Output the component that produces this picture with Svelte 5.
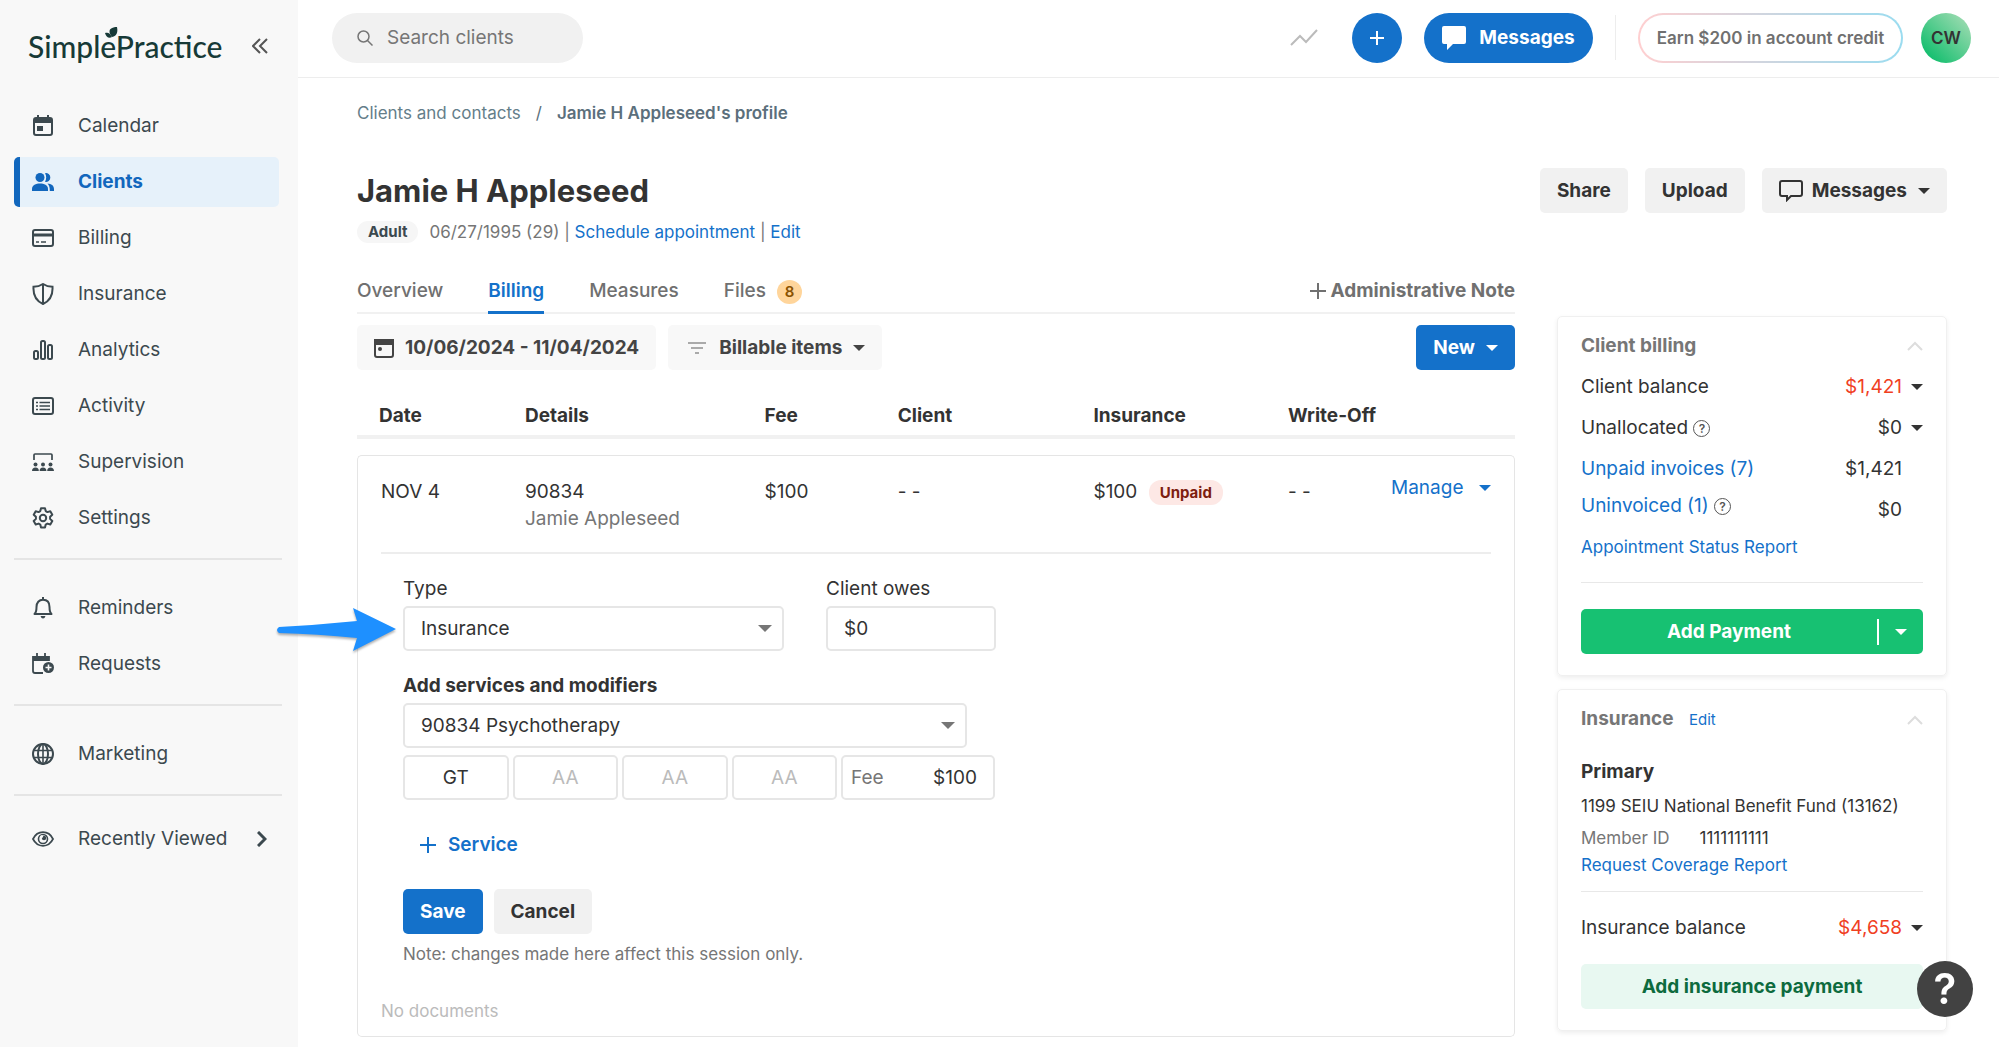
<script>
    let type = "Insurance"
    let service = "90834 Psychotherapy"
    let clientOwes = "$0"
    let fee = "$100"
    let modifiers = ["GT", "", "", ""]
    let search = ""

    // inner shapes of the 22x22 sidebar icons
    const icons = {
        calendar: `<path d="M6 0v4M16 0v4" stroke-width="2"/><rect x="2" y="3" width="18" height="17" rx="2"/><path d="M2 3h18v5H2z" fill="currentColor" stroke="none"/><path d="M5 11h6v5H5z" fill="currentColor" stroke="none"/>`,
        clients: `<g fill="currentColor" stroke="none"><circle cx="8" cy="6.500" r="4.500"/><path d="M0 20v-2c0-4 4-5.500 8-5.500s8 1.500 8 5.500v2z"/><path d="M13 2.200a4.400 4.400 0 1 1 0 8.600c1.600-2.400 1.600-6.200 0-8.600z"/><path d="M15.500 12.600c3.800.4 6.500 2 6.500 5.400v2h-4.200c.1-3-.5-5.600-2.300-7.400z"/></g>`,
        billing: `<rect x="1" y="3" width="20" height="16" rx="2"/><path d="M1 8h20" stroke-width="3"/><path d="M4 15h3M9 15h5" stroke-width="1.500"/>`,
        insurance: `<path d="M11 1c-3 2-6 2.700-9.500 2.800C1 12 4 18 11 21c7-3 10-9 9.500-17.200C17 3.700 14 3 11 1zM11 1v20"/>`,
        analytics: `<rect x="2" y="12" width="4" height="8" rx="1.500"/><rect x="9" y="2" width="4" height="18" rx="1.500"/><rect x="16" y="6" width="4" height="14" rx="1.500"/>`,
        activity: `<rect x="1" y="3" width="20" height="16" rx="2"/><path d="M7.500 7.500H18M7.500 11H18M7.500 14.500H18M4 7.500h2M4 11h2M4 14.500h2" stroke-width="1.600"/>`,
        supervision: `<path d="M2 9V4q0-1 1-1h16q1 0 1 1v5" stroke-width="1.700"/><g fill="currentColor" stroke="none"><circle cx="3.500" cy="13.500" r="2"/><circle cx="11" cy="13.500" r="2"/><circle cx="18.500" cy="13.500" r="2"/><path d="M0 20q0-3.500 3.500-3.500T6.800 20zM7.600 20q0-3.500 3.400-3.500t3.400 3.500zM15.200 20q0-3.500 3.300-3.500T22 20z"/></g>`,
        settings: `<path d="M9 1.200h4l.7 2.900 1.700 1 2.900-.9 2 3.500-2.200 2v2.200l2.200 2.100-2 3.500-2.900-.9-1.700 1-.7 2.900H9l-.7-2.900-1.700-1-2.900.9-2-3.500 2.200-2.100V9.700L1.700 7.700l2-3.500 2.900.9 1.700-1z" stroke-linejoin="round"/><circle cx="11" cy="11" r="3.200"/>`,
        reminders: `<path d="M11 0v3M2.500 17c1.600-1.500 2-3 2-7C4.500 5.500 7 2.800 11 2.800s6.500 2.700 6.500 7.200c0 4 .4 5.500 2 7z" stroke-linejoin="round"/><path d="M8.500 19h5q-.8 2.500-2.500 2.500T8.500 19z" fill="currentColor" stroke="none"/>`,
        requests: `<path d="M5 0v4M13 0v4M11 20H3q-2 0-2-2V4h16v4" stroke-width="1.800"/><path d="M1 3h16v5H1z" fill="currentColor" stroke="none"/><circle cx="16.500" cy="14.500" r="5.500" fill="currentColor" stroke="none"/><path d="M16.500 11.500v6M13.500 14.500h6" stroke="#f8f8f8" stroke-width="1.600"/>`,
        marketing: `<circle cx="11" cy="11" r="10"/><ellipse cx="11" cy="11" rx="5" ry="10"/><path d="M11 1v20M2 7.500h18M2 14.500h18" stroke-width="1.600"/>`,
        viewed: `<path d="M1 11C5.500.7 16.500.7 21 11 16.500 21.300 5.500 21.300 1 11z" transform="translate(0 1.300) scale(1 .88)"/><circle cx="11" cy="11" r="4.500" stroke-width="1.600"/><circle cx="12" cy="10" r="2.200" fill="currentColor" stroke="none"/><circle cx="9.700" cy="8.600" r="1.400" fill="#f8f8f8" stroke="none"/>`,
    }

    const navGroups = [
        [
            { label: "Calendar", icon: "calendar" },
            { label: "Clients", icon: "clients", active: true },
            { label: "Billing", icon: "billing" },
            { label: "Insurance", icon: "insurance" },
            { label: "Analytics", icon: "analytics" },
            { label: "Activity", icon: "activity" },
            { label: "Supervision", icon: "supervision" },
            { label: "Settings", icon: "settings" },
        ],
        [
            { label: "Reminders", icon: "reminders" },
            { label: "Requests", icon: "requests" },
        ],
        [{ label: "Marketing", icon: "marketing" }],
        [{ label: "Recently Viewed", icon: "viewed", more: true }],
    ]
</script>

<div class="app">
    <aside>
        <div class="brand">
            <a class="logo" href="#home">
                SimplePractice
                <svg class="leaf" viewBox="0 0 14 12" width="14" height="12">
                    <path d="M5 7C3 2 7 0 12 0c1 5 0 9-5 10z" />
                    <path d="M0 6c3-1 5 0 7 4-3 2-6 0-7-4z" />
                </svg>
            </a>
            <button class="plain collapse" aria-label="Collapse menu">
                <svg viewBox="0 0 16 16" width="16" height="16">
                    <path d="M8 1L1 8l7 7M15 1L8 8l7 7" />
                </svg>
            </button>
        </div>
        <nav>
            {#each navGroups as group}
                <ul>
                    {#each group as item}
                        <li>
                            <a class="item" class:active={item.active} href="#{item.icon}">
                                <svg viewBox="0 0 22 22" width="22" height="22">{@html icons[item.icon]}</svg>
                                {item.label}
                                {#if item.more}
                                    <svg class="more" viewBox="0 0 10 16" width="10" height="16">
                                        <path d="M1 1l7 7-7 7" />
                                    </svg>
                                {/if}
                            </a>
                        </li>
                    {/each}
                </ul>
            {/each}
        </nav>
    </aside>

    <div class="page">
        <header>
            <label class="search">
                <svg viewBox="0 0 16 16" width="16" height="16">
                    <circle cx="6.500" cy="6.500" r="5.500" />
                    <path d="M10.500 10.500l5 5" />
                </svg>
                <input type="text" placeholder="Search clients" aria-label="Search clients" bind:value={search} />
            </label>
            <div class="actions">
                <button class="plain trend" aria-label="Trends">
                    <svg viewBox="0 0 28 18" width="28" height="18"><path d="M1 16l9-9 6 6L27 1" /></svg>
                </button>
                <button class="add" aria-label="Add">
                    <svg viewBox="0 0 16 16" width="16" height="16"><path d="M8 1v14M1 8h14" /></svg>
                </button>
                <button class="inbox">
                    <svg viewBox="0 0 24 24" width="24" height="24">
                        <path d="M2 0h20q2 0 2 2v14q0 2-2 2H11l-6 6v-6H2q-2 0-2-2V2q0-2 2-2z" />
                    </svg>
                    Messages
                </button>
                <span class="bar"></span>
                <button class="earn">Earn $200 in account credit</button>
                <button class="avatar">CW</button>
            </div>
        </header>

        <main>
            <div class="crumbs">
                <a href="#clients">Clients and contacts</a>
                <span>/</span>
                <b>Jamie H Appleseed's profile</b>
            </div>

            <div class="title">
                <h1>Jamie H Appleseed</h1>
                <div class="title-buttons">
                    <button class="btn">Share</button>
                    <button class="btn">Upload</button>
                    <button class="btn">
                        <svg class="bubble" viewBox="0 0 24 22" width="24" height="22">
                            <path d="M3 1h18q2 0 2 2v11q0 2-2 2H12l-4 4v-4H3q-2 0-2-2V3q0-2 2-2z" />
                        </svg>
                        Messages
                        <span class="caret"></span>
                    </button>
                </div>
            </div>
            <div class="sub">
                <span class="pill">Adult</span>
                <span>06/27/1995 (29) | <a href="#schedule">Schedule appointment</a> | <a href="#edit">Edit</a></span>
            </div>

            <div class="columns">
                <section>
                    <div class="tabs">
                        <a href="#overview">Overview</a>
                        <a class="current" href="#billing-tab">Billing</a>
                        <a href="#measures">Measures</a>
                        <a href="#files">Files <span class="count">8</span></a>
                        <button class="plain note-button">
                            <svg viewBox="0 0 16 16" width="16" height="16"><path d="M8 0v16M0 8h16" /></svg>
                            Administrative Note
                        </button>
                    </div>

                    <div class="filters">
                        <button class="btn light">
                            <svg class="cal" viewBox="0 0 20 20" width="20" height="20">
                                <rect x="1" y="2" width="18" height="17" rx="2" />
                                <path d="M0 1h20v6H0z" />
                                <circle cx="6" cy="11" r="2" />
                            </svg>
                            10/06/2024 - 11/04/2024
                        </button>
                        <button class="btn light filter">
                            <svg class="lines" viewBox="0 0 18 12" width="18" height="12">
                                <path d="M0 1h18M3 6h12M7 11h4" />
                            </svg>
                            Billable items
                            <span class="caret"></span>
                        </button>
                        <button class="btn blue new">New <span class="caret"></span></button>
                    </div>

                    <table>
                        <thead>
                            <tr>
                                <th class="date">Date</th>
                                <th class="details">Details</th>
                                <th class="fee">Fee</th>
                                <th class="client">Client</th>
                                <th class="insurance">Insurance</th>
                                <th class="write-off">Write-Off</th>
                                <th aria-label="Actions"></th>
                            </tr>
                        </thead>
                        <tbody>
                            <tr class="gap"><td colspan="7"></td></tr>
                            <tr class="entry">
                                <td>NOV 4</td>
                                <td>90834<br /><span class="muted">Jamie Appleseed</span></td>
                                <td>$100</td>
                                <td>- -</td>
                                <td>$100 <span class="unpaid">Unpaid</span></td>
                                <td>- -</td>
                                <td class="manage">
                                    <button class="plain">Manage <span class="caret"></span></button>
                                </td>
                            </tr>
                            <tr>
                                <td class="editor" colspan="7">
                                    <form on:submit|preventDefault>
                                        <div class="row">
                                            <div class="field type">
                                                <label for="type">Type</label>
                                                <div class="select">
                                                    <select id="type" bind:value={type}>
                                                        <option>Insurance</option>
                                                        <option>Self-pay</option>
                                                    </select>
                                                </div>
                                                <svg class="pointer" viewBox="0 0 120 46" width="120" height="46">
                                                    <path d="M2 20Q40 18 80 14L76 1l43 21-43 22 4-13Q40 27 2 26q-4-3 0-6z" />
                                                </svg>
                                            </div>
                                            <div class="field owes">
                                                <label for="owes">Client owes</label>
                                                <input id="owes" type="text" bind:value={clientOwes} />
                                            </div>
                                        </div>
                                        <div class="field services">
                                            <label for="service">Add services and modifiers</label>
                                            <div class="select">
                                                <select id="service" bind:value={service}>
                                                    <option>90834 Psychotherapy</option>
                                                    <option>90837 Psychotherapy</option>
                                                </select>
                                            </div>
                                        </div>
                                        <div class="modifiers">
                                            {#each modifiers as modifier, i}
                                                <input type="text" placeholder="AA" aria-label="Modifier {i + 1}" bind:value={modifier} />
                                            {/each}
                                            <label class="fee-box">Fee <input type="text" bind:value={fee} /></label>
                                        </div>
                                        <button type="button" class="plain add-service">
                                            <svg viewBox="0 0 16 16" width="16" height="16"><path d="M8 0v16M0 8h16" /></svg>
                                            Service
                                        </button>
                                        <div class="form-buttons">
                                            <button class="btn blue">Save</button>
                                            <button type="button" class="btn">Cancel</button>
                                        </div>
                                        <p class="hint">Note: changes made here affect this session only.</p>
                                    </form>
                                    <p class="documents">No documents</p>
                                </td>
                            </tr>
                        </tbody>
                    </table>
                </section>

                <div class="cards">
                    <div class="card">
                        <div class="card-title">
                            <h2>Client billing</h2>
                            <button class="plain" aria-label="Collapse client billing">
                                <svg class="up" viewBox="0 0 16 10" width="16" height="10"><path d="M1 9l7-7 7 7" /></svg>
                            </button>
                        </div>
                        <div class="amounts">
                            <div class="amount">
                                <span>Client balance</span>
                                <button class="plain"><span class="red">$1,421</span><span class="caret"></span></button>
                            </div>
                            <div class="amount">
                                <span>Unallocated <span class="info">?</span></span>
                                <button class="plain">$0<span class="caret"></span></button>
                            </div>
                            <div class="amount">
                                <a href="#unpaid">Unpaid invoices (7)</a>
                                <span class="value">$1,421</span>
                            </div>
                            <div class="amount raised">
                                <span><a href="#uninvoiced">Uninvoiced (1)</a> <span class="info">?</span></span>
                                <span class="value">$0</span>
                            </div>
                        </div>
                        <a class="small report" href="#report">Appointment Status Report</a>
                        <hr />
                        <div class="payment">
                            <button>Add Payment</button>
                            <button class="split" aria-label="More payment options"><span class="caret"></span></button>
                        </div>
                    </div>

                    <div class="card">
                        <div class="card-title">
                            <h2>Insurance <a class="edit" href="#edit-insurance">Edit</a></h2>
                            <button class="plain" aria-label="Collapse insurance">
                                <svg class="up" viewBox="0 0 16 10" width="16" height="10"><path d="M1 9l7-7 7 7" /></svg>
                            </button>
                        </div>
                        <h3>Primary</h3>
                        <p class="small plan">1199 SEIU National Benefit Fund (13162)</p>
                        <p class="small member"><span class="muted">Member ID</span> 1111111111</p>
                        <a class="small" href="#coverage">Request Coverage Report</a>
                        <hr class="tight" />
                        <div class="amount">
                            <span>Insurance balance</span>
                            <button class="plain"><span class="red">$4,658</span><span class="caret"></span></button>
                        </div>
                        <button class="btn insurance-payment">Add insurance payment</button>
                    </div>
                </div>
            </div>
        </main>
    </div>

    <button class="help" aria-label="Help">?</button>
</div>

<style>
    :global(body) {
        margin: 0;
        background: #fff;
    }

    .app {
        display: flex;
        min-height: 100vh;
        font-family: Inter, "Liberation Sans", sans-serif;
        font-size: 19px;
        line-height: 24px;
        color: #333;
    }

    .app * {
        box-sizing: border-box;
    }

    a {
        color: #1471ca;
        text-decoration: none;
    }

    button,
    input,
    select {
        font: inherit;
        color: inherit;
    }

    button {
        border: none;
        padding: 0;
        cursor: pointer;
        white-space: nowrap;
    }

    svg {
        flex: none;
        fill: none;
        stroke: currentColor;
        stroke-width: 2;
    }

    h1,
    h2,
    h3,
    p,
    ul {
        margin: 0;
        padding: 0;
    }

    .plain {
        display: flex;
        align-items: center;
        background: none;
    }

    .caret {
        flex: none;
        border: 6px solid transparent;
        border-top-color: currentColor;
        border-bottom: none;
    }

    .muted {
        color: #767676;
    }

    /* sidebar */
    aside {
        flex: none;
        width: 298px;
        background: #f8f8f8;
        color: #3c494f;
    }

    .brand {
        display: flex;
        align-items: center;
        justify-content: space-between;
        height: 92px;
        padding: 0 30px 0 28px;
    }

    .logo {
        position: relative;
        color: #173a37;
        font-family: Lato, sans-serif;
        font-size: 30px;
        font-weight: 500;
    }

    .leaf {
        position: absolute;
        left: 77px;
        top: -7px;
        fill: currentColor;
        stroke: none;
    }

    .collapse {
        color: #555;
    }

    nav {
        padding: 9px 16px 0 14px;
    }

    ul {
        display: flex;
        flex-direction: column;
        gap: 6px;
        list-style: none;
        padding-bottom: 15px;
    }

    ul + ul {
        border-top: 2px solid #e5e5e5;
        padding-top: 23px;
    }

    ul:last-child {
        padding-top: 18px;
    }

    .item {
        display: flex;
        align-items: center;
        gap: 24px;
        height: 50px;
        margin-right: 3px;
        padding: 0 12px 0 18px;
        border-radius: 5px;
        color: inherit;
    }

    .item.active {
        padding-left: 12px;
        border-left: 6px solid #1267bd;
        background: #e6f1fa;
        color: #1267bd;
        font-weight: 700;
    }

    .more {
        margin-left: auto;
        stroke-width: 3;
    }

    /* top bar */
    .page {
        flex: 1;
        min-width: 0;
    }

    header {
        display: flex;
        align-items: center;
        justify-content: space-between;
        height: 78px;
        padding: 0 28px 2px 34px;
        border-bottom: 1px solid #ededed;
    }

    .search {
        display: flex;
        align-items: center;
        gap: 14px;
        width: 251px;
        height: 50px;
        padding: 0 20px 0 25px;
        border-radius: 25px;
        background: #f1f1f1;
        color: #767676;
    }

    .search svg {
        stroke-width: 1.5;
    }

    .search input {
        width: 100%;
        min-width: 0;
        padding: 0;
        border: none;
        outline: none;
        background: none;
    }

    .search input::placeholder {
        color: #767676;
        opacity: 1;
    }

    .actions {
        display: flex;
        align-items: center;
    }

    .trend {
        margin-right: 34px;
        color: #bbb;
    }

    .add,
    .inbox {
        display: flex;
        align-items: center;
        justify-content: center;
        height: 50px;
        border-radius: 25px;
        background: #1471ca;
        color: #fff;
    }

    .add {
        width: 50px;
        margin-right: 22px;
    }

    .inbox {
        gap: 13px;
        width: 169px;
        font-weight: 700;
    }

    .inbox svg {
        fill: #fff;
        stroke: none;
    }

    .bar {
        width: 1px;
        height: 45px;
        margin: 0 22px;
        background: #ededed;
    }

    .earn {
        width: 265px;
        height: 50px;
        border: 2px solid transparent;
        border-radius: 25px;
        background:
            linear-gradient(#fff, #fff) padding-box,
            linear-gradient(90deg, #ffcfd0, #9adcf0) border-box;
        color: #707070;
        font-size: 17px;
        font-weight: 600;
    }

    .avatar {
        width: 50px;
        height: 50px;
        margin-left: 18px;
        border-radius: 50%;
        background: linear-gradient(45deg, #17bf70 15%, #93d9ac 85%);
        color: #333;
        font-size: 17px;
        font-weight: 600;
    }

    /* client profile */
    main {
        padding: 25px 52px 10px 59px;
    }

    .crumbs {
        display: flex;
        gap: 15px;
        font-size: 17px;
        line-height: 20px;
        color: #5b6f7c;
    }

    .crumbs a {
        color: #647e8a;
    }

    .crumbs b {
        font-weight: 600;
    }

    .title {
        display: flex;
        align-items: center;
        justify-content: space-between;
        margin-top: 45px;
    }

    h1 {
        font-size: 31px;
        line-height: 40px;
        font-weight: 700;
    }

    .title-buttons {
        display: flex;
        gap: 17px;
    }

    .btn {
        display: flex;
        align-items: center;
        justify-content: center;
        height: 45px;
        padding: 0 17px;
        border-radius: 5px;
        background: #f1f1f1;
        font-weight: 700;
    }

    .btn .caret {
        margin-left: 11px;
    }

    .btn.light {
        background: #f8f8f8;
        color: #444;
    }

    .btn.blue {
        background: #1471ca;
        color: #fff;
    }

    .bubble {
        margin-right: 9px;
    }

    .sub {
        display: flex;
        align-items: center;
        gap: 11px;
        margin-top: 8px;
        font-size: 17px;
        line-height: 22px;
        color: #767676;
    }

    .pill {
        padding: 0 11px;
        border-radius: 11px;
        background: #f6f6f6;
        color: #3c494f;
        font-size: 15px;
        font-weight: 700;
    }

    .columns {
        display: grid;
        grid-template-columns: minmax(0, 1fr) 390px;
        gap: 42px;
        margin-top: 36px;
    }

    .tabs {
        display: flex;
        gap: 45px;
        border-bottom: 2px solid #f1f1f1;
        font-weight: 500;
        white-space: nowrap;
    }

    .tabs a {
        padding-bottom: 7px;
        margin-bottom: -2px;
        border-bottom: 3px solid transparent;
        color: #707070;
    }

    .tabs a.current {
        border-color: #1471ca;
        color: #1471ca;
        font-weight: 600;
    }

    .count {
        display: inline-block;
        width: 25px;
        margin-left: 6px;
        border-radius: 50%;
        background: #ffd59b;
        color: #8a5200;
        font-size: 15px;
        font-weight: 600;
        text-align: center;
    }

    .note-button {
        gap: 5px;
        height: 24px;
        margin-left: auto;
        color: #707070;
        font-weight: 700;
    }

    .filters {
        display: flex;
        gap: 12px;
        margin-top: 11px;
    }

    .cal {
        margin-right: 11px;
    }

    .cal path,
    .cal circle {
        fill: currentColor;
        stroke: none;
    }

    .lines {
        margin: 0 13px 0 3px;
        color: #aaa;
    }

    .new {
        margin-left: auto;
    }

    table {
        width: 100%;
        margin-top: 34px;
        table-layout: fixed;
        border-spacing: 0;
    }

    th {
        padding: 0 0 7px;
        border-bottom: 4px solid #f1f1f1;
        font-weight: 700;
        text-align: left;
        white-space: nowrap;
    }

    .date {
        width: 14.5%;
        padding-left: 22px;
    }

    .details {
        width: 20.7%;
    }

    .fee {
        width: 11.5%;
    }

    .client {
        width: 16.9%;
    }

    .insurance {
        width: 16.8%;
    }

    .write-off {
        width: 8.9%;
    }

    .gap td {
        height: 16px;
        padding: 0;
    }

    .entry td {
        padding: 22px 0 20px;
        border-top: 1px solid #e5e5e5;
        line-height: 27px;
        vertical-align: top;
        white-space: nowrap;
    }

    .entry td:first-child {
        padding-left: 23px;
        border-left: 1px solid #e5e5e5;
        border-top-left-radius: 5px;
    }

    .entry td:last-child {
        border-right: 1px solid #e5e5e5;
        border-top-right-radius: 5px;
    }

    .unpaid {
        margin-left: 6px;
        padding: 3px 11px;
        border-radius: 12px;
        background: #fde8e5;
        color: #7e1e10;
        font-size: 15px;
        font-weight: 700;
    }

    .entry .manage {
        padding: 18px 23px 0 0;
    }

    .manage button {
        justify-content: space-between;
        width: 100%;
        color: #1471ca;
    }

    .editor {
        padding: 0 23px 15px;
        border: 1px solid #e5e5e5;
        border-top: none;
        border-radius: 0 0 5px 5px;
    }

    form {
        padding: 23px 22px 0;
        border-top: 2px solid #ededed;
    }

    .row {
        display: flex;
        gap: 42px;
    }

    .field {
        position: relative;
        display: flex;
        flex-direction: column;
        gap: 5px;
    }

    .type {
        width: 381px;
    }

    .owes {
        width: 170px;
    }

    .services {
        width: 564px;
        margin-top: 23px;
    }

    .services label {
        font-weight: 700;
    }

    form input,
    select {
        width: 100%;
        height: 45px;
        padding: 0 16px;
        border: 2px solid #e6e6e6;
        border-radius: 5px;
        outline: none;
        background: #fff;
        appearance: none;
    }

    .select {
        position: relative;
    }

    .select::after {
        content: "";
        position: absolute;
        top: 19px;
        right: 12px;
        border: 7px solid transparent;
        border-top-color: #767676;
        border-bottom: none;
        pointer-events: none;
    }

    .pointer {
        position: absolute;
        right: calc(100% + 6px);
        bottom: -2px;
        fill: #1e90ff;
        stroke: none;
        filter: drop-shadow(0 2px 1px rgba(0, 0, 0, 0.3));
    }

    .modifiers {
        display: flex;
        gap: 4px;
        width: 592px;
        margin-top: 7px;
    }

    .modifiers > input {
        flex: 1;
        min-width: 0;
        text-align: center;
    }

    .modifiers > input::placeholder {
        color: #bbb;
        opacity: 1;
    }

    .fee-box {
        display: flex;
        align-items: center;
        width: 154px;
        height: 45px;
        padding-left: 8px;
        border: 2px solid #e6e6e6;
        border-radius: 5px;
        color: #767676;
    }

    .fee-box input {
        min-width: 0;
        height: 24px;
        padding: 0 16px 0 0;
        border: none;
        color: #333;
        text-align: right;
    }

    .add-service {
        gap: 12px;
        margin: 33px 0 32px 17px;
        color: #1471ca;
        font-weight: 600;
    }

    .form-buttons {
        display: flex;
        gap: 11px;
    }

    .hint,
    .documents {
        font-size: 17px;
        line-height: 20px;
    }

    .hint {
        margin-top: 10px;
        color: #767676;
    }

    .documents {
        margin-top: 37px;
        color: #bbb;
    }

    /* right column */
    .cards {
        display: flex;
        flex-direction: column;
        gap: 13px;
        padding-top: 37px;
    }

    .card {
        padding: 17px 23px 21px;
        border: 1px solid #f0f0f0;
        border-radius: 5px;
        box-shadow: 0 2px 5px rgba(0, 0, 0, 0.07);
    }

    .card-title {
        display: flex;
        align-items: center;
        justify-content: space-between;
    }

    h2 {
        color: #767676;
        font-size: 19px;
        font-weight: 700;
    }

    .edit {
        margin-left: 11px;
        font-size: 15px;
        font-weight: 400;
    }

    .up {
        color: #ddd;
    }

    .amounts {
        margin-top: 8px;
    }

    .amount {
        display: flex;
        align-items: center;
        justify-content: space-between;
    }

    .amounts .amount {
        height: 41px;
    }

    .amount .plain {
        gap: 9px;
    }

    .value {
        padding-right: 21px;
    }

    .raised > :first-child {
        padding-bottom: 8px;
    }

    .red {
        color: #f0401f;
    }

    .info {
        display: inline-block;
        width: 17px;
        height: 17px;
        border: 1px solid #555;
        border-radius: 50%;
        color: #555;
        font-size: 12px;
        line-height: 15px;
        font-weight: 600;
        text-align: center;
        vertical-align: 1px;
    }

    .small {
        display: block;
        font-size: 17px;
        line-height: 20px;
        white-space: nowrap;
    }

    .report {
        margin-top: 7px;
    }

    hr {
        margin: 25px 0 26px;
        border: none;
        border-top: 1px solid #e8e8e8;
    }

    hr.tight {
        margin: 16px 0 24px;
    }

    .payment {
        display: flex;
        align-items: center;
        height: 45px;
        border-radius: 5px;
        background: #17c172;
        color: #fff;
    }

    .payment button {
        flex: 1;
        background: none;
        font-weight: 700;
    }

    .payment .split {
        display: flex;
        flex: none;
        justify-content: center;
        width: 46px;
        height: 26px;
        align-items: center;
        border-left: 2px solid #fff;
    }

    h3 {
        margin-top: 28px;
        font-size: 19px;
        font-weight: 700;
    }

    .plan {
        margin-top: 12px;
    }

    .member {
        display: flex;
        gap: 30px;
        margin: 12px 0 7px;
    }

    .insurance-payment {
        width: 100%;
        margin-top: 24px;
        background: #e8f8f1;
        color: #0d6b3e;
    }

    .help {
        position: fixed;
        right: 26px;
        bottom: 30px;
        width: 56px;
        height: 56px;
        border-radius: 50%;
        background: #424242;
        color: #fff;
        font-size: 42px;
        font-weight: 600;
    }
</style>
